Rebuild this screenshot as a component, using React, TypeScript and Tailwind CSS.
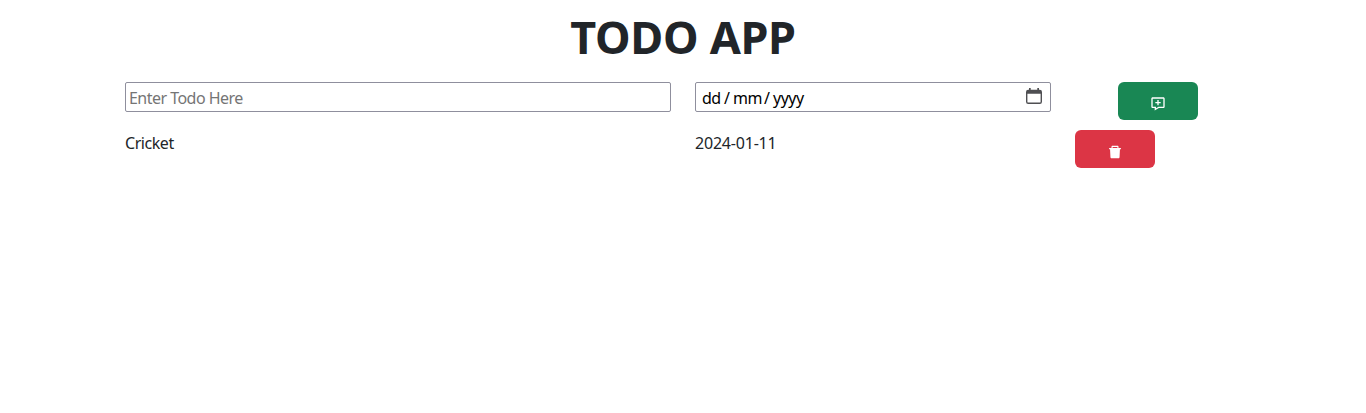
import { useState } from "react";
import { BiMessageAdd } from "react-icons/bi";
import { AiFillDelete } from "react-icons/ai";

const initialTodos = [{ name: "Cricket", date: "2024-01-11" }];

function CalendarIcon() {
  return (
    <svg className="mb-[3px]" width="16" height="16" viewBox="0 0 16 16" fill="#4f4f52" aria-hidden="true">
      <path
        fillRule="evenodd"
        d="M3 0h1.7v1.7h6.6V0H13v1.7h.8A2.2 2.2 0 0 1 16 3.9v9.9a2.2 2.2 0 0 1-2.2 2.2H2.2A2.2 2.2 0 0 1 0 13.8V3.9a2.2 2.2 0 0 1 2.2-2.2H3V0ZM1.4 5.8v7.9a.9.9 0 0 0 .9.9h11.4a.9.9 0 0 0 .9-.9V5.8H1.4Z"
      />
    </svg>
  );
}

export default function App() {
  const [todos, setTodos] = useState(initialTodos);
  const [name, setName] = useState("");

  return (
    <main className="min-h-[413px] bg-white font-['Noto_Sans',sans-serif] text-base text-[#212529]">
      <h1 className="h-[82px] pt-[10px] text-center text-[45px] leading-[54px] font-bold tracking-[-0.3px]">
        TODO APP
      </h1>
      <div className="mx-auto w-[1140px]">
        <div className="grid h-12 grid-cols-[570px_380px_190px]">
          <div className="px-3">
            <input
              value={name}
              onChange={(e) => setName(e.target.value)}
              placeholder="Enter Todo Here"
              className="block h-[30px] w-full rounded-[2px] border border-[#8f8f9d] px-[3px] pt-[2px] tracking-[-0.53px] placeholder:text-[#757575]"
            />
          </div>
          <div className="px-3">
            <div className="flex h-[30px] items-center justify-between rounded-[2px] border border-[#8f8f9d] pr-2 pl-[6px] text-black">
              <div className="flex pt-[2px] tracking-[-0.5px]">
                <span className="w-[22px]">dd</span>
                <span className="w-[9px]">/</span>
                <span className="w-[31px]">mm</span>
                <span className="w-[9px]">/</span>
                <span>yyyy</span>
              </div>
              <CalendarIcon />
            </div>
          </div>
          <div className="flex justify-center px-3">
            <button
              onClick={() => {
                if (name) setTodos([...todos, { name, date: "" }]);
                setName("");
              }}
              className="flex h-[38px] w-20 items-center justify-center rounded-md bg-[#198754] pt-[6px] text-white"
            >
              <BiMessageAdd />
            </button>
          </div>
        </div>
        {todos.map((todo, index) => (
          <div key={index} className="grid h-12 grid-cols-[570px_380px_190px]">
            <div className="px-3 pt-px tracking-[-0.45px]">{todo.name}</div>
            <div className="px-3 pt-px tracking-[-0.2px]">{todo.date}</div>
            <div className="px-3">
              <button
                onClick={() => setTodos(todos.filter((_, i) => i !== index))}
                className="flex h-[38px] w-20 items-center justify-center rounded-md bg-[#dc3545] pt-[6px] text-white"
              >
                <AiFillDelete />
              </button>
            </div>
          </div>
        ))}
      </div>
    </main>
  );
}
